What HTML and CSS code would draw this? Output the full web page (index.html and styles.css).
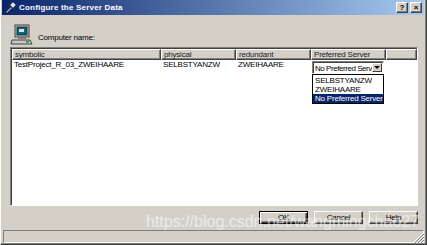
FILE: index.html
```html
<!DOCTYPE html>
<html lang="en">
<head>
  <meta charset="UTF-8" />
  <title>Configure the Server Data</title>
  <link rel="stylesheet" href="styles.css">
</head>
<body>
  <div class="window">
    <div class="titlebar">
      <svg class="title-icon" width="11" height="11" viewBox="0 0 11 11">
        <path d="M1 10 L6 5 L7 6 L2 11 Z" fill="#c0c0c0" stroke="#404040" stroke-width="0.6"/>
        <path d="M5 3 L8 0 L11 3 L8 6 Z" fill="#e0e0e0" stroke="#404040" stroke-width="0.6"/>
      </svg>
      <span class="title">Configure the Server Data</span>
      <div class="title-buttons">
        <div class="tbtn">?</div>
        <div class="tbtn">×</div>
      </div>
    </div>

    <div class="content">
      <div class="computer">
        <svg width="24" height="22" viewBox="0 0 24 22">
          <rect x="5" y="1" width="14" height="12" fill="#c0c0c0" stroke="#404040" stroke-width="1"/>
          <rect x="7" y="3" width="10" height="8" fill="#006b80" stroke="#202020" stroke-width="0.8"/>
          <rect x="9" y="5" width="5" height="3" fill="#e0e0e0"/>
          <rect x="8" y="13" width="8" height="2" fill="#808080"/>
          <path d="M2 16 L20 16 L22 20 L1 20 Z" fill="#c8c8c8" stroke="#404040" stroke-width="1"/>
          <rect x="16" y="17" width="3" height="1.5" fill="#00a000"/>
        </svg>
        <span>Computer name:</span>
      </div>

      <div class="list">
        <div class="header">
          <div class="col c1">symbolic</div>
          <div class="col c2">physical</div>
          <div class="col c3">redundant</div>
          <div class="col c4">Preferred Server</div>
          <div class="col c5"></div>
        </div>
        <div class="row">
          <div class="cell c1">TestProject_R_03_ZWEIHAARE</div>
          <div class="cell c2">SELBSTYANZW</div>
          <div class="cell c3">ZWEIHAARE</div>
          <div class="cell c4">
            <div class="combo">
              <div class="combo-text">No Preferred Serve</div>
              <div class="combo-btn"><span class="arrow"></span></div>
              <div class="dropdown">
                <div class="opt">SELBSTYANZW</div>
                <div class="opt">ZWEIHAARE</div>
                <div class="opt selected">No Preferred Server</div>
              </div>
            </div>
          </div>
        </div>
      </div>

      <div class="buttons">
        <button class="btn default">OK</button>
        <button class="btn">Cancel</button>
        <button class="btn"><u>H</u>elp</button>
      </div>
    </div>

    <div class="statusbar">
      <div class="status-panel"></div>
      <svg class="grip" width="11" height="11" viewBox="0 0 11 11">
        <path d="M10 1 L1 10 M10 4 L4 10 M10 7 L7 10" stroke="#ffffff" stroke-width="1"/>
        <path d="M11 2 L2 11 M11 5 L5 11 M11 8 L8 11" stroke="#808080" stroke-width="1"/>
      </svg>
    </div>

    <div class="watermark">https://blog.csdn.net/wangmingchao27</div>
  </div>
</body>
</html>
```

FILE: styles.css
```css
body {
  margin: 0;
  padding: 0;
  background: #d4d0c8;
  font-family: 'Liberation Sans', Arial, sans-serif;
  font-size: 8px;
  color: #000;
}

.window {
  position: relative;
  width: 427px;
  height: 245px;
  box-sizing: border-box;
  display: flex;
  flex-direction: column;
  background: #d4d0c8;
  border-left: 1px solid #ffffff;
  border-right: 1px solid #404040;
  border-bottom: 1px solid #404040;
  box-shadow: inset -1px -1px #808080;
  overflow: hidden;
}

.titlebar {
  height: 15px;
  margin: 0 2px 0 1px;
  display: flex;
  align-items: center;
  background: linear-gradient(to right, #0a246a, #a6caf0);
  color: #fff;
}

.title-icon {
  margin: 0 3px 0 3px;
}

.title {
  font-weight: bold;
  font-size: 8px;
  letter-spacing: 0.2px;
  flex: 1;
}

.title-buttons {
  display: flex;
  gap: 2px;
  margin-right: 2px;
}

.tbtn {
  width: 10px;
  height: 9px;
  background: #d4d0c8;
  color: #000;
  font-size: 8px;
  font-weight: bold;
  line-height: 9px;
  text-align: center;
  border: 1px solid;
  border-color: #fff #404040 #404040 #fff;
  box-shadow: inset -1px -1px #808080;
}

.content {
  flex: 1;
  display: flex;
  flex-direction: column;
  padding: 5px 8px 0 9px;
}

.computer {
  display: flex;
  align-items: flex-end;
  gap: 4px;
  height: 26px;
}

.computer span {
  margin-bottom: 4px;
  letter-spacing: -0.2px;
}

.list {
  margin-top: 1px;
  height: 156px;
  background: #fff;
  border: 1px solid;
  border-color: #808080 #fff #fff #808080;
  box-shadow: inset 1px 1px #404040;
  padding: 1px 0 0 1px;
  letter-spacing: -0.2px;
}

.header {
  display: flex;
  height: 11px;
}

.col {
  box-sizing: border-box;
  background: #d4d0c8;
  color: #222;
  line-height: 9px;
  padding-left: 2px;
  border: 1px solid;
  border-color: #fff #404040 #404040 #fff;
  box-shadow: inset -1px -1px #808080;
  white-space: nowrap;
  overflow: hidden;
}

.c1 { width: 149px; }
.c2 { width: 75px; }
.c3 { width: 75px; }
.c4 { width: 75px; }
.c5 { flex: 1; }

.row {
  display: flex;
  height: 14px;
  margin-top: 1px;
}

.cell {
  box-sizing: border-box;
  padding-left: 2px;
  line-height: 8px;
  white-space: nowrap;
}

.cell.c4 {
  padding-left: 1px;
}

.combo {
  position: relative;
  width: 72px;
  height: 13px;
  box-sizing: border-box;
  display: flex;
  background: #fff;
  border: 1px solid;
  border-color: #808080 #fff #fff #808080;
  box-shadow: inset 1px 1px #404040;
}

.combo-text {
  flex: 1;
  padding: 2px 0 0 2px;
  line-height: 9px;
  letter-spacing: -0.45px;
  overflow: hidden;
  white-space: nowrap;
}

.combo-btn {
  width: 10px;
  margin: 1px 1px 1px 0;
  box-sizing: border-box;
  background: #d4d0c8;
  border: 1px solid;
  border-color: #fff #404040 #404040 #fff;
  display: flex;
  align-items: center;
  justify-content: center;
}

.arrow {
  width: 0;
  height: 0;
  border-left: 3px solid transparent;
  border-right: 3px solid transparent;
  border-top: 3px solid #000;
}

.dropdown {
  position: absolute;
  top: 12px;
  left: -1px;
  width: 72px;
  box-sizing: border-box;
  background: #fff;
  border: 1px solid #000;
  padding: 1px 0 0 0;
}

.opt {
  height: 9px;
  line-height: 9px;
  padding-left: 2px;
  white-space: nowrap;
}

.opt.selected {
  background: #0a246a;
  color: #fff;
}

.buttons {
  display: flex;
  justify-content: flex-end;
  gap: 6px;
  margin-top: 5px;
  margin-right: 0;
}

.btn {
  width: 49px;
  height: 13px;
  padding: 0;
  font-family: 'Liberation Sans', Arial, sans-serif;
  font-size: 8px;
  letter-spacing: -0.2px;
  line-height: 9px;
  background: #d4d0c8;
  color: #000;
  border: 1px solid;
  border-color: #fff #404040 #404040 #fff;
  box-shadow: inset -1px -1px #808080;
}

.btn.default {
  border: 1px solid #000;
  box-shadow: inset 1px 1px #fff, inset -1px -1px #404040, inset -2px -2px #808080;
}

.statusbar {
  height: 13px;
  margin: 0 2px 1px 2px;
  display: flex;
  align-items: flex-end;
  position: relative;
}

.status-panel {
  flex: 1;
  height: 11px;
  border: 1px solid;
  border-color: #808080 #fff #fff #808080;
}

.grip {
  position: absolute;
  right: 0;
  bottom: 0;
}

/* site watermark over the screenshot */
.watermark {
  position: absolute;
  left: 145px;
  top: 213px;
  font-family: 'Liberation Sans', Arial, sans-serif;
  font-size: 16px;
  color: rgba(255, 255, 255, 0.6);
  white-space: nowrap;
  pointer-events: none;
}
```
